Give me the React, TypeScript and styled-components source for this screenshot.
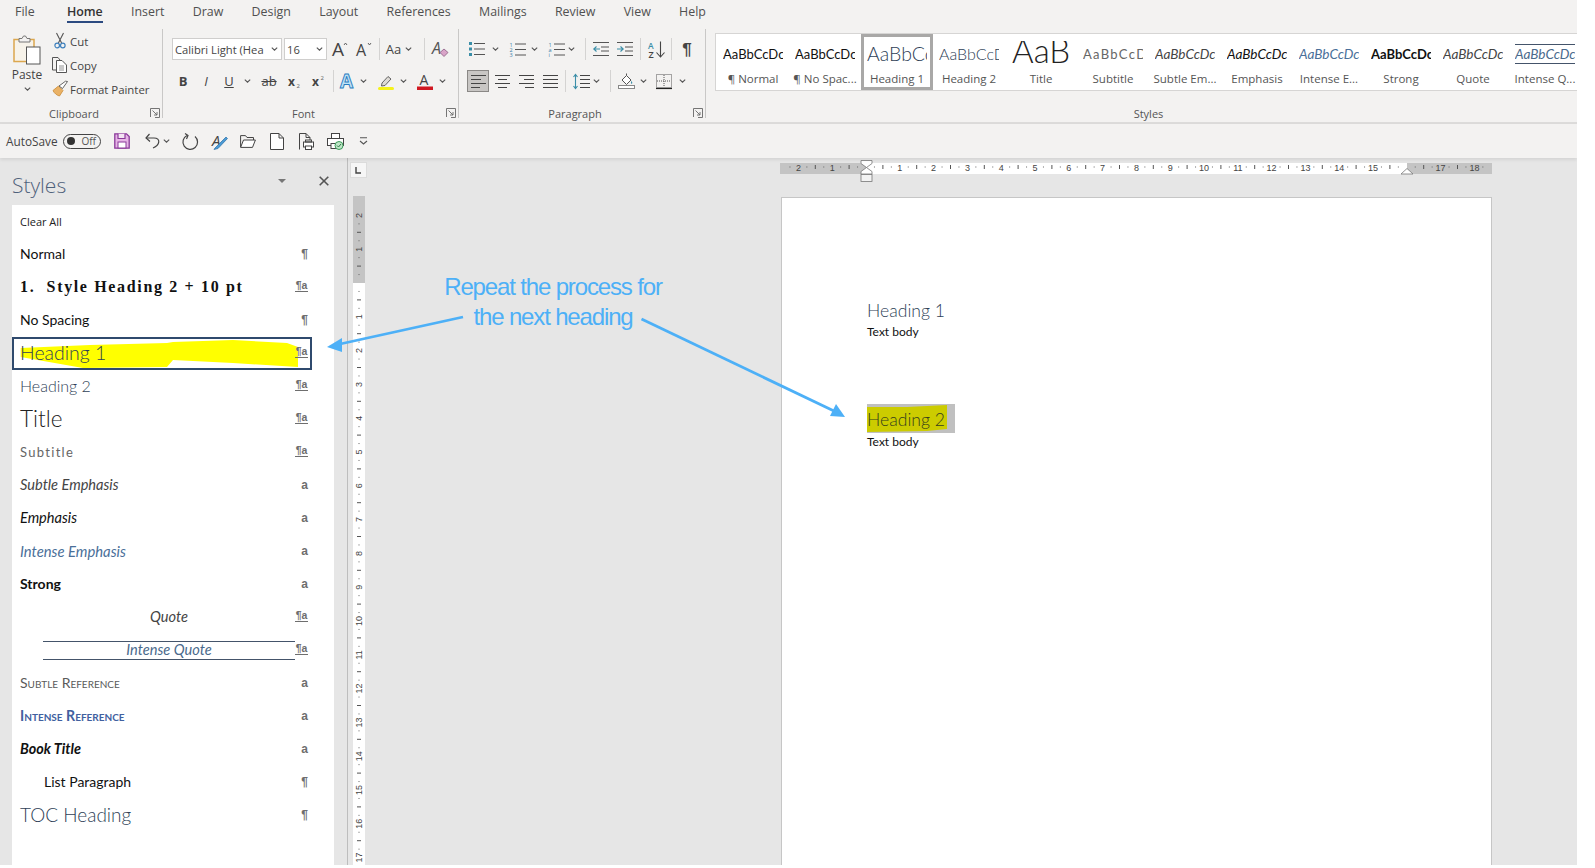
import React from 'react';
import styled, { createGlobalStyle, css } from 'styled-components';

const Global = createGlobalStyle`
  html, body { margin: 0; padding: 0; background: #fff; overflow: hidden; }
  * { box-sizing: border-box; }
`;

const UI = `"Open Sans", "Liberation Sans", sans-serif`;
const CAL = `Lato, "Open Sans", sans-serif`;
const NAVY = '#44546a';
const INK = '#2f3f57';

const App0 = styled.div`
  position: relative;
  width: 1577px;
  height: 865px;
  overflow: hidden;
  background: #e6e6e6;
  font-family: ${UI};
  color: #444;
  display: flex;
  flex-direction: column;
`;

/* ---------- tabs ---------- */
const TabBar = styled.div`
  height: 28px;
  flex: none;
  background: #f3f2f1;
  display: flex;
  gap: 28.3px;
  padding-left: 15px;
`;
const Tab = styled.div<{ $on?: boolean }>`
  position: relative;
  height: 23px;
  line-height: 23px;
  font-size: 12.4px;
  color: ${p => (p.$on ? '#333' : '#505050')};
  font-weight: ${p => (p.$on ? 600 : 400)};
  ${p => p.$on && css`border-bottom: 2px solid #2b4a80; margin-left: 4px;`}
`;

/* ---------- ribbon ---------- */
const Ribbon = styled.div`
  height: 96px;
  flex: none;
  background: #f3f2f1;
  border-bottom: 2px solid #dcdbda;
  display: flex;
`;
const Group = styled.div<{ $w?: number }>`
  ${p => (p.$w ? `width:${p.$w}px; flex:none;` : 'flex:1; min-width:0;')}
  display: flex;
  flex-direction: column;
`;
const Divider = styled.div`
  width: 1px;
  flex: none;
  background: #c9c8c7;
  margin: 1px 0 4px;
`;
const GroupBody = styled.div`
  height: 78px;
  flex: none;
  overflow: hidden;
`;
const ToolBody = styled(GroupBody)<{ $pad: number }>`
  padding: 10px 0 0 ${p => p.$pad}px;
  display: flex;
  flex-direction: column;
  gap: 10px;
`;
const ClipBody = styled(GroupBody)`
  display: flex;
`;
const GroupFoot = styled.div<{ $pl?: number }>`
  height: 14px;
  display: flex;
  align-items: center;
  padding-left: ${p => p.$pl ?? 0}px;
`;
const GroupName = styled.div`
  flex: 1;
  text-align: center;
  font-size: 11px;
  color: #555;
`;
const Launcher = styled.div`
  width: 14px;
  display: flex;
  justify-content: center;
`;
const ToolRow = styled.div`
  height: 22px;
  display: flex;
  align-items: center;
`;
const Tool = styled.div<{ $w: number; $ml?: number; $on?: boolean }>`
  width: ${p => p.$w}px;
  height: 22px;
  margin-left: ${p => p.$ml ?? 0}px;
  flex: none;
  display: flex;
  align-items: center;
  justify-content: center;
  color: #444;
  ${p => p.$on && css`background: #c8c6c4; outline: 1px solid #8a8886; outline-offset: -1px;`}
`;
const Sep = styled.div<{ $ml?: number }>`
  width: 1px;
  height: 22px;
  flex: none;
  background: #d4d3d2;
  margin-left: ${p => p.$ml ?? 0}px;
`;
const FieldBox = styled.div<{ $w: number; $ml?: number }>`
  width: ${p => p.$w}px;
  height: 22px;
  margin-left: ${p => p.$ml ?? 0}px;
  flex: none;
  background: #fff;
  border: 1px solid #cfcecd;
  display: flex;
  align-items: center;
  justify-content: space-between;
  padding: 0 3px 0 2px;
  font-size: 11.2px;
  color: #444;
  white-space: nowrap;
`;
const PasteCol = styled.div`
  width: 52px;
  flex: none;
  padding: 7px 0 0 2px;
  display: flex;
  flex-direction: column;
  align-items: center;
  font-size: 12px;
  color: #444;
`;
const PasteLabel = styled.div`
  line-height: 18px;
  margin: 1px 0 3px;
`;
const ClipList = styled.div`
  padding-top: 1px;
  display: flex;
  flex-direction: column;
`;
const ClipItem = styled.div`
  height: 24px;
  display: flex;
  align-items: center;
  gap: 2px;
  font-size: 11.4px;
  color: #444;
  white-space: nowrap;
`;
const ClipIcon = styled.div`
  width: 16px;
  display: flex;
  justify-content: center;
`;

/* ---------- gallery ---------- */
const Gallery = styled.div`
  margin: 5px 0 0 9px;
  height: 58px;
  flex: none;
  background: #fff;
  border: 1px solid #d6d5d4;
  border-right: 0;
  padding-left: 1px;
  display: flex;
  overflow: hidden;
`;
const GalleryItem = styled.div<{ $on?: boolean }>`
  width: 72px;
  height: 56px;
  flex: none;
  padding-top: 5px;
  display: flex;
  flex-direction: column;
  align-items: center;
  ${p => p.$on && css`box-shadow: inset 0 0 0 3px #a9a8a7;`}
`;
const variants: Record<string, ReturnType<typeof css>> = {
  normal: css`font-size: 14px; color: #111;`,
  serif: css`font-family: "Liberation Serif", serif; font-size: 16px; font-weight: 700; letter-spacing: 1.65px; white-space: pre; color: #111;`,
  h1: css`font-size: 19.5px; font-weight: 300; color: ${INK};`,
  h2: css`font-size: 16px; font-weight: 300; color: ${INK};`,
  title: css`font-size: 22.5px; font-weight: 300; color: #222;`,
  subtitle: css`font-size: 13px; letter-spacing: 1.3px; color: #666;`,
  subtleEm: css`font-size: 14.6px; font-style: italic; color: #444;`,
  em: css`font-size: 14.6px; font-style: italic; color: #111;`,
  intenseEm: css`font-size: 14.8px; font-style: italic; color: #4a6f99;`,
  strong: css`font-size: 14px; font-weight: 700; color: #111;`,
  quote: css`font-size: 14.6px; font-style: italic; color: #444;`,
  intenseQ: css`font-size: 14.6px; font-style: italic; color: #4a6a8c;`,
  subtleRef: css`font-size: 14px; font-variant: small-caps; color: #5a5a5a;`,
  intenseRef: css`font-size: 14.2px; font-variant: small-caps; font-weight: 700; color: #41609f;`,
  book: css`font-size: 14.4px; font-weight: 700; font-style: italic; color: #111;`,
  toc: css`font-size: 19px; font-weight: 300; color: ${INK};`,
};
const Sample = styled.div<{ $v: string }>`
  width: 60px;
  height: 30px;
  overflow: hidden;
  white-space: nowrap;
  line-height: 30px;
  font-family: ${CAL};
  ${p => variants[p.$v]}
  ${p => (p.$v === 'normal' || p.$v === 'strong') && css`font-size: 13px;`}
  ${p => ['subtleEm', 'em', 'intenseEm', 'quote', 'intenseQ'].includes(p.$v) && css`font-size: 13.6px;`}
`;
const SampleTitle = styled(Sample)`
  height: 28px;
  margin-top: 2px;
  line-height: 19px;
  font-size: 33px;
  width: 58px;
`;
const SampleQuote = styled(Sample)`
  height: 20px;
  margin: 5px 0;
  line-height: 18px;
  border-top: 1px solid ${NAVY};
  border-bottom: 1px solid ${NAVY};
`;
const SampleName = styled.div`
  font-size: 11.5px;
  line-height: 14px;
  margin-top: 3px;
  color: #555;
  white-space: nowrap;
`;

/* ---------- quick access ---------- */
const Qat = styled.div`
  height: 34px;
  flex: none;
  position: relative;
  z-index: 2;
  background: #f3f2f1;
  box-shadow: 0 2px 3px rgba(0, 0, 0, 0.08);
  display: flex;
  align-items: center;
  padding-left: 6px;
`;
const QatLabel = styled.div`
  width: 57px;
  flex: none;
  font-size: 11.8px;
  color: #444;
`;
const Toggle = styled.div`
  width: 38px;
  height: 15px;
  flex: none;
  border: 1px solid #444;
  border-radius: 8px;
  display: flex;
  align-items: center;
  justify-content: space-between;
  padding: 0 4px 0 3px;
  font-size: 10px;
  color: #555;
`;
const ToggleDot = styled.i`
  width: 8px;
  height: 8px;
  border-radius: 50%;
  background: #333;
`;

/* ---------- main ---------- */
const Main = styled.div`
  flex: 1;
  min-height: 0;
  display: flex;
`;
const Pane = styled.div`
  width: 348px;
  flex: none;
  border-right: 1px solid #bdbdbd;
  padding-left: 12px;
  display: flex;
  flex-direction: column;
`;
const PaneHead = styled.div`
  height: 47px;
  flex: none;
  display: flex;
  align-items: center;
  padding-top: 7px;
`;
const PaneTitle = styled.div`
  flex: 1;
  font-size: 21px;
  font-weight: 300;
  color: #4f617b;
  line-height: 26px;
`;
const PaneCaret = styled.div`
  width: 0;
  height: 0;
  margin: -8px 33px 0 0;
  border-left: 4px solid transparent;
  border-right: 4px solid transparent;
  border-top: 4px solid #777;
`;
const PaneClose = styled.div`
  margin: -8px 18px 0 0;
  display: flex;
`;
const StyleList = styled.div`
  flex: 1;
  width: 322px;
  background: #fff;
  padding-top: 1px;
`;
const ClearRow = styled.div`
  height: 32px;
  line-height: 32px;
  padding-left: 8px;
  font-size: 11px;
  color: #222;
`;
const StyleRow = styled.div<{ $on?: boolean }>`
  position: relative;
  width: 300px;
  height: 33px;
  display: flex;
  align-items: center;
  padding: 0 4px 0 8px;
  ${p => p.$on && css`outline: 2px solid #2f4a6d; outline-offset: -2px;`}
`;
const StyleName = styled.div<{ $v: string; $indent?: number }>`
  position: relative;
  flex: 1;
  margin-left: ${p => p.$indent ?? 0}px;
  margin-top: -2px;
  white-space: nowrap;
  font-family: ${CAL};
  ${p => variants[p.$v]}
`;
const CenterName = styled(StyleName)`
  text-align: center;
  margin-right: -23px;
`;
const BoxedName = styled(StyleName)`
  flex: none;
  width: 252px;
  margin-left: 23px;
  margin-right: -15px;
  margin-top: 0;
  height: 19px;
  line-height: 16px;
  text-align: center;
  border-top: 1px solid ${NAVY};
  border-bottom: 1px solid ${NAVY};
`;
const Mark = styled.div<{ $u?: boolean }>`
  position: relative;
  margin-left: auto;
  flex: none;
  width: 13px;
  text-align: ${p => (p.$u ? 'center' : 'right')};
  font-family: "Liberation Sans", sans-serif;
  font-weight: 700;
  font-size: ${p => (p.$u ? 10.5 : 12)}px;
  line-height: 13px;
  color: #6e6e6e;
  ${p => p.$u && css`border-bottom: 1.5px solid #6e6e6e; margin-top: -4px; line-height: 11px;`}
`;
const Blob = styled.svg`
  position: absolute;
  left: 0;
  top: 0;
`;
const RulerCol = styled.div`
  width: 24px;
  flex: none;
  display: flex;
`;
const CornerBox = styled.div`
  position: absolute;
  left: 350px;
  top: 162px;
  width: 17px;
  height: 16px;
  background: #f6f6f6;
  border: 1px solid #dcdcdc;
  display: flex;
  align-items: center;
  justify-content: center;
`;
const DocArea = styled.div`
  flex: 1;
  min-width: 0;
  display: flex;
  flex-direction: column;
  padding-left: 408px;
`;
const HRulerWrap = styled.div`
  height: 39px;
  flex: none;
  display: flex;
`;
const Page = styled.div`
  width: 711px;
  margin-left: 1px;
  flex: 1;
  background: #fff;
  border: 1px solid #c6c6c6;
  border-width: 1.5px 1.5px 0 1.5px;
  padding: 100px 0 0 85px;
`;
const DocHeading = styled.div`
  font-family: ${CAL};
  font-size: 17.6px;
  font-weight: 300;
  line-height: 25px;
  color: ${INK};
`;
const DocBody = styled.div`
  font-family: ${CAL};
  font-size: 12px;
  line-height: 18px;
  color: #111;
`;
const MarkedLine = styled.div`
  position: relative;
  width: 88px;
  height: 29px;
  margin-top: 63px;
  background: #c0c0c0;
`;
const MarkedText = styled(DocHeading)`
  position: relative;
  line-height: 31px;
  color: #36401c;
`;
const Overlay = styled.svg`
  position: absolute;
  left: 0;
  top: 0;
  pointer-events: none;
`;
const Callout = styled.div`
  position: absolute;
  left: 433px;
  top: 272px;
  width: 240px;
  text-align: center;
  font-family: "Liberation Sans", Arial, sans-serif;
  font-size: 24px;
  line-height: 29.5px;
  letter-spacing: -1.15px;
  color: #4db0f7;
`;

/* ---------- icons ---------- */
const Ic = styled.svg`
  display: block;
  flex: none;
  overflow: visible;
`;
const I: React.FC<{ w: number; h: number; children: React.ReactNode }> = ({ w, h, children }) => (
  <Ic width={w} height={h} viewBox={`0 0 ${w} ${h}`} fill="none">
    {children}
  </Ic>
);
const Chev = () => (
  <I w={7} h={4}>
    <path d="M.8.6 3.5 3.2 6.2.6" stroke="#555" strokeWidth="1.1" />
  </I>
);
const LaunchIc = () => (
  <I w={10} h={10}>
    <path d="M.5 9V.5H9.5V9.5H5" stroke="#666" strokeWidth=".9" />
    <path d="M2.5 2.5 7 7M7 4v3H4" stroke="#666" strokeWidth=".9" />
  </I>
);
const PasteIc = () => (
  <I w={28} h={30}>
    <rect x="1" y="4.5" width="20" height="22" fill="#f7f3ea" stroke="#dca74e" strokeWidth="1.5" />
    <path d="M6 7V3.5h3L10.5 1h2L14 3.5h3V7z" fill="#f3f2f1" stroke="#777" />
    <rect x="13.5" y="12" width="13.5" height="17" fill="#fff" stroke="#555" />
  </I>
);
const CutIc = () => (
  <I w={12} h={16}>
    <path d="M2.5 0 7.6 10M9.5 0 4.4 10" stroke="#555" strokeWidth="1.1" />
    <circle cx="3.2" cy="12.5" r="2.3" stroke="#3f80bd" strokeWidth="1.2" />
    <circle cx="8.8" cy="12.5" r="2.3" stroke="#3f80bd" strokeWidth="1.2" />
  </I>
);
const CopyIc = () => (
  <I w={16} h={16}>
    <path d="M4 13H.5V.5H6L8 3" stroke="#555" />
    <path d="M4.5 3.5H10L14.5 8V15.5H4.5z" fill="#fff" stroke="#555" />
    <path d="M7 9h5M7 11h5M7 13h5" stroke="#777" strokeWidth=".8" />
  </I>
);
const PainterIc = () => (
  <I w={16} h={16}>
    <path d="M1 9.5 6.5 5 11 9.5 7.5 15C5 14.5 2 12 1 9.5Z" fill="#eab266" stroke="#c98a35" strokeWidth=".8" />
    <path d="M7 5 10.5 7.5 15.5.5 13.5.2z" fill="#fff" stroke="#555" strokeWidth=".9" />
  </I>
);
const FxA = ({ size, mark }: { size: number; mark: 'up' | 'down' }) => (
  <I w={16} h={16}>
    <text x="0" y="14.5" fontFamily={UI} fontSize={size} fill="#444">A</text>
    <path d={mark === 'up' ? 'M12 4 13.5 2 15 4' : 'M12 2 13.5 4 15 2'} stroke="#555" strokeWidth=".9" />
  </I>
);
const Txt = styled.span<{ $s: number; $b?: boolean; $i?: boolean; $c?: string; $f?: string; $u?: boolean; $st?: boolean }>`
  font-size: ${p => p.$s}px;
  font-weight: ${p => (p.$b ? 700 : 400)};
  font-style: ${p => (p.$i ? 'italic' : 'normal')};
  color: ${p => p.$c ?? '#444'};
  font-family: ${p => p.$f ?? UI};
  text-decoration: ${p => (p.$u ? 'underline' : p.$st ? 'line-through' : 'none')};
  line-height: 1;
`;
const ClearIc = () => (
  <I w={17} h={17}>
    <text x="0" y="13" fontFamily={UI} fontSize="16" fontStyle="italic" fill="#555">A</text>
    <path d="M8 11.5 12 8l4 3.5-4 4z" fill="#d9a4c8" stroke="#8a5a80" strokeWidth=".8" />
  </I>
);
const SubIc = ({ sup }: { sup?: boolean }) => (
  <I w={14} h={14}>
    <text x="0" y="12" fontFamily={UI} fontSize="12" fontWeight="700" fill="#444">x</text>
    <text x="8.5" y={sup ? 6 : 14} fontFamily={UI} fontSize="6" fill="#666">2</text>
  </I>
);
const TextFxIc = () => (
  <I w={16} h={16}>
    <text x="0" y="14.5" fontFamily={UI} fontSize="19" fontWeight="700" fill="#bfe3f7" stroke="#2a7cc0" strokeWidth=".9">A</text>
  </I>
);
const HighlightIc = () => (
  <I w={18} h={17}>
    <path d="M5 10 11 3.5 14 6 8 12.5 4.5 13z" fill="#dedbd6" stroke="#555" strokeWidth=".9" />
    <rect x="1" y="14" width="16" height="3" rx="1.5" fill="#f5f21a" />
  </I>
);
const ColorAIc = () => (
  <I w={16} h={17}>
    <text x="2.5" y="12" fontFamily={UI} fontSize="14" fill="#444">A</text>
    <rect x="0" y="13.5" width="16" height="3.5" fill="#d01822" />
  </I>
);
const lines = (xs: number, xe: number, ys: number[], c = '#555') => (
  <path d={ys.map(y => `M${xs} ${y}H${xe}`).join('')} stroke={c} strokeWidth="1" />
);
const BulletsIc = () => (
  <I w={16} h={14}>
    <rect x="0" y="0" width="3" height="3" fill="#3a8ea8" />
    <rect x="0" y="5.5" width="3" height="3" fill="#3a8ea8" />
    <rect x="0" y="11" width="3" height="3" fill="#3a8ea8" />
    {lines(5, 16, [1.5, 7, 12.5])}
  </I>
);
const NumIc = ({ marks }: { marks: string[] }) => (
  <I w={17} h={15}>
    {marks.map((m, i) => (
      <text key={i} x="0.5" y={5 + i * 5} fontFamily={UI} fontSize="5.5" fill="#3a7ea8">{m}</text>
    ))}
    {lines(6, 17, [2, 7.5, 13])}
  </I>
);
const IndentIc = ({ dir }: { dir: 'in' | 'out' }) => (
  <I w={16} h={14}>
    {lines(0, 16, [.5, 13.5])}
    {lines(8, 16, [5, 9])}
    <path d={dir === 'out' ? 'M7 7H.8M3.5 4.5.8 7l2.7 2.5' : 'M0 7h6.2M3.5 4.5 6.2 7 3.5 9.5'} stroke="#3a8ea8" strokeWidth="1.1" />
  </I>
);
const SortIc = () => (
  <I w={17} h={17}>
    <text x="0" y="7.5" fontFamily={UI} fontSize="8.5" fontWeight="600" fill="#3a8ea8">A</text>
    <text x="0.5" y="16.5" fontFamily={UI} fontSize="9" fontWeight="600" fill="#444">Z</text>
    <path d="M12.5.5v15M8.5 11.5l4 4.5 4-4.5" stroke="#444" strokeWidth="1.1" />
  </I>
);
const AlignIc = ({ kind }: { kind: 'l' | 'c' | 'r' | 'j' }) => {
  const rows: [number, number][] =
    kind === 'l' ? [[0, 15], [0, 10], [0, 15], [0, 9]]
    : kind === 'c' ? [[0, 15], [3, 12], [0, 15], [3, 12]]
    : kind === 'r' ? [[0, 15], [5, 15], [0, 15], [6, 15]]
    : [[0, 15], [0, 15], [0, 15], [0, 15]];
  return (
    <I w={15} h={13}>
      <path d={rows.map(([a, b], i) => `M${a} ${.5 + i * 4}H${b}`).join('')} stroke="#444" strokeWidth="1" />
    </I>
  );
};
const SpacingIc = () => (
  <I w={17} h={15}>
    <path d="M2.5.5v14M.5 3l2-2.5 2 2.5M.5 12l2 2.5 2-2.5" stroke="#3a8ea8" strokeWidth="1.1" />
    {lines(7, 17, [1.5, 5.5, 9.5, 13.5], '#444')}
  </I>
);
const ShadeIc = () => (
  <I w={17} h={16}>
    <path d="M4 7 8.5 2.5 13 7 8.5 11.5z" fill="#fff" stroke="#555" />
    <path d="M8.5 2.5V.5" stroke="#555" />
    <path d="M13 7.5l1.5 2.5-1.5 1z" fill="#3a8ea8" />
    <rect x=".5" y="12.5" width="16" height="3" fill="#fff" stroke="#888" />
  </I>
);
const BordersIc = () => (
  <I w={16} h={15}>
    <path d="M.5.5h15v13H.5zM8 1v12M1 7h14" stroke="#555" strokeDasharray="1 1" />
    <path d="M0 14.5h16" stroke="#222" strokeWidth="1.2" />
  </I>
);
const SaveIc = () => (
  <I w={16} h={16}>
    <path d="M.8.8H12.5L15.2 3.5V15.2H.8z" fill="#e6b4e6" stroke="#8a3a9a" strokeWidth="1.3" />
    <path d="M4 .8V5.5H11V.8" stroke="#8a3a9a" strokeWidth="1.2" fill="#f3e4f3" />
    <rect x="4" y="9" width="8" height="6" fill="#fff" stroke="#8a3a9a" />
  </I>
);
const UndoIc = () => (
  <I w={15} h={16}>
    <path d="M4.5 1 1 5l4 3.5" stroke="#444" strokeWidth="1.2" />
    <path d="M1.5 5H9c7 0 6 7-1 10" stroke="#444" strokeWidth="1.2" />
  </I>
);
const RedoIc = () => (
  <I w={17} h={17}>
    <path d="M5 2.5A7.3 7.3 0 1 0 13 3.5" stroke="#444" strokeWidth="1.2" />
    <path d="M3 .5 6 2.5 4.5 6" stroke="#444" strokeWidth="1.2" />
  </I>
);
const SpellIc = () => (
  <I w={17} h={17}>
    <text x="1" y="13" fontFamily={UI} fontStyle="italic" fontSize="15" fill="#444">A</text>
    <path d="M4 15 15 4l1.5 1.5L7 15.5 3 16.5z" fill="#4a9ad4" stroke="#2b6fa8" strokeWidth=".7" />
  </I>
);
const OpenIc = () => (
  <I w={16} h={13}>
    <path d="M.6 12V.6H5.5L7 2.5H13.5V5" stroke="#444" />
    <path d="M.6 12.4 3.5 5H15.4L12.5 12.4z" fill="#fff" stroke="#444" />
  </I>
);
const NewIc = () => (
  <I w={14} h={17}>
    <path d="M.5.5H9L13.5 5V16.5H.5zM9 .5V5H13.5" fill="#fff" stroke="#444" />
  </I>
);
const PreviewIc = () => (
  <I w={15} h={17}>
    <path d="M.5 16.5V.5H7L11 4.5V7M7 .5V4.5H11" stroke="#444" />
    <rect x="4.5" y="9" width="10" height="5" fill="#fff" stroke="#444" />
    <rect x="6.5" y="7" width="6" height="2" stroke="#444" />
    <rect x="6.5" y="13" width="6" height="3.5" fill="#fff" stroke="#444" />
  </I>
);
const PrintIc = () => (
  <I w={17} h={17}>
    <rect x="4.5" y=".5" width="8" height="5" fill="#fff" stroke="#444" />
    <rect x=".5" y="5.5" width="16" height="7" fill="#fff" stroke="#444" />
    <rect x="4" y="10.5" width="6" height="5" fill="#fff" stroke="#444" />
    <circle cx="12" cy="12.5" r="4" fill="#bfe6c8" stroke="#3c9a5a" />
    <path d="M10 12.5l1.5 1.5 2.5-3" stroke="#2f7d47" />
  </I>
);
const CustomizeIc = () => (
  <I w={9} h={9}>
    <path d="M1 .8h7M1 4l3.5 3L8 4" stroke="#555" strokeWidth="1.1" />
  </I>
);

/* ---------- rulers ---------- */
const CM = 33.8;
const rFont = `"Liberation Sans", sans-serif`;
const HRuler = () => {
  const origin = 86;
  const end = 627;
  const ticks: React.ReactNode[] = [];
  for (let q = -10; q <= 73; q++) {
    const x = origin + (q * CM) / 4;
    if (x < 2 || x > 710) continue;
    const cm = q / 4;
    if (q === 0 || q === 64) continue;
    if (q % 4 === 0) {
      ticks.push(
        <text key={q} x={x} y={12} textAnchor="middle" fontFamily={rFont} fontSize="9" fill="#444">{Math.abs(cm)}</text>
      );
    } else if (q % 2 === 0) {
      ticks.push(<path key={q} d={`M${x} 6v4`} stroke="#555" />);
    } else {
      ticks.push(<path key={q} d={`M${x} 7.5v1`} stroke="#666" />);
    }
  }
  return (
    <I w={712} h={26}>
      <g transform="translate(0 1)">
        <rect x="0" y="4" width="712" height="11" fill="#fff" />
        <rect x="0" y="4" width={origin} height="11" fill="#c4c4c4" />
        <rect x={end} y="4" width={712 - end} height="11" fill="#c4c4c4" />
        {ticks}
        <path d="M81 1.500h11v3l-5.500 4-5.500-4zM86.500 8.500l5.500 4v2.500h-11V12.500z" fill="#fff" stroke="#777" strokeWidth=".8" />
        <rect x="81" y="15.500" width="11" height="7" fill="#f3f3f3" stroke="#777" strokeWidth=".8" />
        <path d="M621 15l6-5.500 6 5.500z" fill="#fff" stroke="#777" strokeWidth=".8" />
      </g>
    </I>
  );
};
const VRuler = () => {
  const origin = 125;
  const ticks: React.ReactNode[] = [];
  for (let q = -8; q <= 72; q++) {
    if (q === 0) continue;
    const y = origin + (q * CM) / 4;
    if (y < 40 || y > 707) continue;
    if (q % 4 === 0) {
      ticks.push(
        <text key={q} transform={`translate(14 ${y}) rotate(-90)`} textAnchor="middle" fontFamily={rFont} fontSize="9" fill="#444">{Math.abs(q / 4)}</text>
      );
    } else if (q % 2 === 0) {
      ticks.push(<path key={q} d={`M9 ${y}h4`} stroke="#555" />);
    } else {
      ticks.push(<path key={q} d={`M10.500 ${y}h1`} stroke="#666" />);
    }
  }
  return (
    <I w={24} h={707}>
      <rect x="5" y="38" width="12" height="669" fill="#fff" />
      <rect x="5" y="38" width="12" height={origin - 38} fill="#c4c4c4" />
      {ticks}
    </I>
  );
};

/* ---------- data ---------- */
const gallery: { s: string; v: string; t: string }[] = [
  { s: 'AaBbCcDc', v: 'normal', t: '¶ Normal' },
  { s: 'AaBbCcDc', v: 'normal', t: '¶ No Spac...' },
  { s: 'AaBbCc', v: 'h1', t: 'Heading 1' },
  { s: 'AaBbCcD', v: 'h2', t: 'Heading 2' },
  { s: 'AaB', v: 'title', t: 'Title' },
  { s: 'AaBbCcD', v: 'subtitle', t: 'Subtitle' },
  { s: 'AaBbCcDc', v: 'subtleEm', t: 'Subtle Em...' },
  { s: 'AaBbCcDc', v: 'em', t: 'Emphasis' },
  { s: 'AaBbCcDc', v: 'intenseEm', t: 'Intense E...' },
  { s: 'AaBbCcDc', v: 'strong', t: 'Strong' },
  { s: 'AaBbCcDc', v: 'quote', t: 'Quote' },
  { s: 'AaBbCcDc', v: 'intenseQ', t: 'Intense Q...' },
];
type Row = { t: string; v: string; m: 'p' | 'u' | 'a'; layout?: 'center' | 'boxed'; indent?: number };
const rows: Row[] = [
  { t: 'Normal', v: 'normal', m: 'p' },
  { t: '1.  Style Heading 2 + 10 pt', v: 'serif', m: 'u' },
  { t: 'No Spacing', v: 'normal', m: 'p' },
  { t: 'Heading 1', v: 'h1', m: 'u' },
  { t: 'Heading 2', v: 'h2', m: 'u' },
  { t: 'Title', v: 'title', m: 'u' },
  { t: 'Subtitle', v: 'subtitle', m: 'u' },
  { t: 'Subtle Emphasis', v: 'subtleEm', m: 'a' },
  { t: 'Emphasis', v: 'em', m: 'a' },
  { t: 'Intense Emphasis', v: 'intenseEm', m: 'a' },
  { t: 'Strong', v: 'strong', m: 'a' },
  { t: 'Quote', v: 'quote', m: 'u', layout: 'center' },
  { t: 'Intense Quote', v: 'intenseQ', m: 'u', layout: 'boxed' },
  { t: 'Subtle Reference', v: 'subtleRef', m: 'a' },
  { t: 'Intense Reference', v: 'intenseRef', m: 'a' },
  { t: 'Book Title', v: 'book', m: 'a' },
  { t: 'List Paragraph', v: 'normal', m: 'p', indent: 24 },
  { t: 'TOC Heading', v: 'toc', m: 'p' },
];
const tabs = ['File', 'Home', 'Insert', 'Draw', 'Design', 'Layout', 'References', 'Mailings', 'Review', 'View', 'Help'];

const RowName: React.FC<{ r: Row }> = ({ r }) => {
  if (r.layout === 'center') return <CenterName $v={r.v}>{r.t}</CenterName>;
  if (r.layout === 'boxed') return <BoxedName $v={r.v}>{r.t}</BoxedName>;
  return <StyleName $v={r.v} $indent={r.indent}>{r.t}</StyleName>;
};

export default function App() {
  return (
    <App0>
      <Global />
      <TabBar>
        {tabs.map(t => (
          <Tab key={t} $on={t === 'Home'}>{t}</Tab>
        ))}
      </TabBar>

      <Ribbon>
        <Group $w={162}>
          <ClipBody>
            <PasteCol>
              <PasteIc />
              <PasteLabel>Paste</PasteLabel>
              <Chev />
            </PasteCol>
            <ClipList>
              <ClipItem><ClipIcon><CutIc /></ClipIcon>Cut</ClipItem>
              <ClipItem><ClipIcon><CopyIc /></ClipIcon>Copy</ClipItem>
              <ClipItem><ClipIcon><PainterIc /></ClipIcon>Format Painter</ClipItem>
            </ClipList>
          </ClipBody>
          <GroupFoot><GroupName>Clipboard</GroupName><Launcher><LaunchIc /></Launcher></GroupFoot>
        </Group>
        <Divider />
        <Group $w={295}>
          <ToolBody $pad={9}>
            <ToolRow>
              <FieldBox $w={110}>Calibri Light (Hea<Chev /></FieldBox>
              <FieldBox $w={43} $ml={2}>16<Chev /></FieldBox>
              <Tool $w={25}><FxA size={19} mark="up" /></Tool>
              <Tool $w={24}><FxA size={16} mark="down" /></Tool>
              <Sep $ml={3} />
              <Tool $w={38}><Txt $s={13}>Aa</Txt>&nbsp;<Chev /></Tool>
              <Sep $ml={6} />
              <Tool $w={30}><ClearIc /></Tool>
            </ToolRow>
            <ToolRow>
              <Tool $w={22}><Txt $s={13} $b>B</Txt></Tool>
              <Tool $w={24}><Txt $s={13} $i>I</Txt></Tool>
              <Tool $w={22}><Txt $s={13} $u>U</Txt></Tool>
              <Tool $w={14}><Chev /></Tool>
              <Tool $w={30}><Txt $s={13} $st>ab</Txt></Tool>
              <Tool $w={18} $ml={2}><SubIc /></Tool>
              <Tool $w={28} $ml={1}><SubIc sup /></Tool>
              <Sep />
              <Tool $w={22} $ml={3}><TextFxIc /></Tool>
              <Tool $w={8}><Chev /></Tool>
              <Tool $w={24} $ml={7}><HighlightIc /></Tool>
              <Tool $w={10}><Chev /></Tool>
              <Tool $w={24} $ml={5}><ColorAIc /></Tool>
              <Tool $w={10}><Chev /></Tool>
            </ToolRow>
          </ToolBody>
          <GroupFoot><GroupName>Font</GroupName><Launcher><LaunchIc /></Launcher></GroupFoot>
        </Group>
        <Divider />
        <Group $w={246}>
          <ToolBody $pad={7}>
            <ToolRow>
              <Tool $w={22}><BulletsIc /></Tool>
              <Tool $w={14}><Chev /></Tool>
              <Tool $w={22} $ml={4}><NumIc marks={['1', '2', '3']} /></Tool>
              <Tool $w={12}><Chev /></Tool>
              <Tool $w={22} $ml={5}><NumIc marks={['1', 'a', 'i']} /></Tool>
              <Tool $w={8}><Chev /></Tool>
              <Sep $ml={10} />
              <Tool $w={22} $ml={4}><IndentIc dir="out" /></Tool>
              <Tool $w={22} $ml={2}><IndentIc dir="in" /></Tool>
              <Sep $ml={4} />
              <Tool $w={22} $ml={4}><SortIc /></Tool>
              <Sep $ml={4} />
              <Tool $w={22} $ml={4}><Txt $s={17} $b $f={rFont}>¶</Txt></Tool>
            </ToolRow>
            <ToolRow>
              <Tool $w={22} $ml={1} $on><AlignIc kind="l" /></Tool>
              <Tool $w={22} $ml={2}><AlignIc kind="c" /></Tool>
              <Tool $w={22} $ml={2}><AlignIc kind="r" /></Tool>
              <Tool $w={22} $ml={2}><AlignIc kind="j" /></Tool>
              <Sep $ml={4} />
              <Tool $w={24} $ml={3}><SpacingIc /></Tool>
              <Tool $w={7}><Chev /></Tool>
              <Sep $ml={10} />
              <Tool $w={22} $ml={4}><ShadeIc /></Tool>
              <Tool $w={12}><Chev /></Tool>
              <Tool $w={22} $ml={4}><BordersIc /></Tool>
              <Tool $w={14}><Chev /></Tool>
            </ToolRow>
          </ToolBody>
          <GroupFoot><GroupName>Paragraph</GroupName><Launcher><LaunchIc /></Launcher></GroupFoot>
        </Group>
        <Divider />
        <Group>
          <GroupBody>
            <Gallery>
              {gallery.map(g => {
                const Comp = g.v === 'title' ? SampleTitle : g.v === 'intenseQ' ? SampleQuote : Sample;
                return (
                  <GalleryItem key={g.t} $on={g.t === 'Heading 1'}>
                    <Comp $v={g.v}>{g.s}</Comp>
                    <SampleName>{g.t}</SampleName>
                  </GalleryItem>
                );
              })}
            </Gallery>
          </GroupBody>
          <GroupFoot $pl={14}><GroupName>Styles</GroupName></GroupFoot>
        </Group>
      </Ribbon>

      <Qat>
        <QatLabel>AutoSave</QatLabel>
        <Toggle><ToggleDot />Off</Toggle>
        <Tool $w={16} $ml={13}><SaveIc /></Tool>
        <Tool $w={16} $ml={14}><UndoIc /></Tool>
        <Tool $w={7} $ml={3}><Chev /></Tool>
        <Tool $w={17} $ml={12}><RedoIc /></Tool>
        <Tool $w={17} $ml={12}><SpellIc /></Tool>
        <Tool $w={16} $ml={12}><OpenIc /></Tool>
        <Tool $w={14} $ml={14}><NewIc /></Tool>
        <Tool $w={15} $ml={15}><PreviewIc /></Tool>
        <Tool $w={17} $ml={13}><PrintIc /></Tool>
        <Tool $w={9} $ml={15}><CustomizeIc /></Tool>
      </Qat>

      <Main>
        <Pane>
          <PaneHead>
            <PaneTitle>Styles</PaneTitle>
            <PaneCaret />
            <PaneClose>
              <I w={10} h={10}>
                <path d="M.7.7 9.300 9.300M9.300.7.7 9.300" stroke="#555" strokeWidth="1.6" />
              </I>
            </PaneClose>
          </PaneHead>
          <StyleList>
            <ClearRow>Clear All</ClearRow>
            {rows.map(r => {
              const on = r.t === 'Heading 1';
              return (
                <StyleRow key={r.t} $on={on}>
                  {on && (
                    <Blob width="300" height="33" viewBox="12 337 300 33">
                      <path
                        d="M20.700 348 90 345 167 343 173 342 233 340 287 343 298 347 298 367 233 363 173 360 167 367 83 368 20.700 357Z"
                        fill="#ffff00"
                      />
                    </Blob>
                  )}
                  <RowName r={r} />
                  {r.m === 'p' && <Mark>¶</Mark>}
                  {r.m === 'a' && <Mark>a</Mark>}
                  {r.m === 'u' && <Mark $u>¶a</Mark>}
                </StyleRow>
              );
            })}
          </StyleList>
        </Pane>
        <RulerCol><VRuler /></RulerCol>
        <DocArea>
          <HRulerWrap><HRuler /></HRulerWrap>
          <Page>
            <DocHeading>Heading 1</DocHeading>
            <DocBody>Text body</DocBody>
            <MarkedLine>
              <Blob width="88" height="29" viewBox="0 0 88 29">
                <path d="M0 3 40 3 80 1 80 25 60 27 0 28Z" fill="#cccc00" />
              </Blob>
              <MarkedText>Heading 2</MarkedText>
            </MarkedLine>
            <DocBody>Text body</DocBody>
          </Page>
        </DocArea>
      </Main>

      <CornerBox>
        <I w={7} h={7}>
          <path d="M1 0V6H6" stroke="#444" strokeWidth="1.4" />
        </I>
      </CornerBox>
      <Callout>Repeat the process for<br />the next heading</Callout>
      <Overlay width="1577" height="865" viewBox="0 0 1577 865">
        <path d="M463 317 340 344" stroke="#4db0f7" strokeWidth="2.8" />
        <path d="M327 347 342 338 342 352Z" fill="#4db0f7" />
        <path d="M641.500 319 834 411" stroke="#4db0f7" strokeWidth="2.8" />
        <path d="M845 417 836 404 830 416Z" fill="#4db0f7" />
      </Overlay>
    </App0>
  );
}
